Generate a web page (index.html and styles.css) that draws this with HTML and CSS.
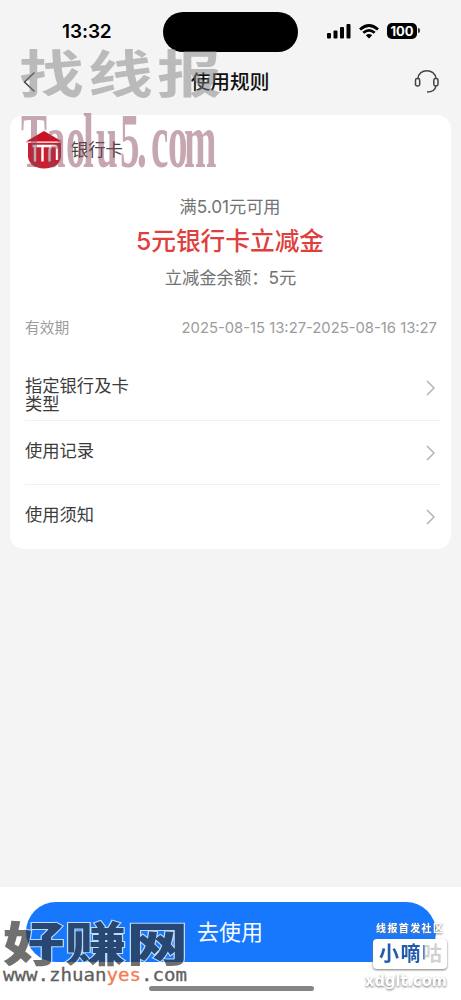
FILE: index.html
```
<!DOCTYPE html>
<html lang="zh-CN">
<head>
<meta charset="utf-8">
<title>使用规则</title>
<link rel="stylesheet" href="styles.css">
</head>
<body>
<div class="screen">
  <header class="status">
    <span class="time">13:32</span>
    <span class="island"></span>
    <div class="indicators">
      <svg width="24" height="16" viewBox="0 0 24 16"><rect x="0" y="10" width="4" height="5.5" rx="1"/><rect x="6.5" y="7.5" width="4" height="8" rx="1"/><rect x="13" y="4" width="4" height="11.5" rx="1"/><rect x="19.5" y="1" width="4" height="14.5" rx="1"/></svg>
      <svg class="wifi" width="20" height="16" viewBox="0 0 20 16"><g fill="none" stroke="#000" stroke-width="2.8"><path d="M1 6.5Q10-1.5 19 6.5"/><path d="M4.3 9.8Q10 5 15.7 9.8"/></g><path d="M6.8 12.3Q10 9.5 13.2 12.3L10 15.5Z"/></svg>
      <span class="battery">100</span>
      <span class="battery-tip"></span>
    </div>
  </header>
  <nav class="nav">
    <svg class="back" width="12" height="22" viewBox="0 0 12 22"><path d="M11.5 1.5L1.5 11L11.5 20.5"/></svg>
    <h1>使用规则</h1>
    <svg class="support" width="26" height="26" viewBox="0 0 26 26"><path d="M4 9.5C4.5-1 21-1 22 9.5M22 16.5C21.5 20.500 18 23 13 23"/><rect x="1.5" y="9.5" width="4.2" height="7.5" rx="1.7"/><rect x="19.8" y="9.5" width="4.2" height="7.5" rx="1.7"/></svg>
  </nav>
  <main class="card">
    <div class="brand">
      <svg width="38" height="40" viewBox="0 0 38 40"><path d="M3 13H36V27Q34 38 19 38.500Q5 38 3 27Z" fill="#c91f31"/><path d="M1 11.500L19 1L37 11.500Z" fill="#ce1025"/><path d="M1 12.500H37" stroke="#f3c5ca" stroke-width="1"/><path d="M7.500 16H29.500Q32 16 32 19V30M10 16V31.500M17.500 16V31.500M24.500 31.500V21Q25 16 28 16" fill="none" stroke="#fff" stroke-width="2.400"/></svg>
      <span>银行卡</span>
    </div>
    <p class="condition">满5.01元可用</p>
    <h2>5元银行卡立减金</h2>
    <p class="balance">立减金余额：5元</p>
    <div class="validity"><span>有效期</span><span class="dates">2025-08-15 13:27-2025-08-16 13:27</span></div>
    <div class="row first"><span>指定银行及卡类型</span><svg class="chevron" width="10" height="16" viewBox="0 0 10 16"><path d="M1 1L8 8L1 15"/></svg></div>
    <div class="row"><span>使用记录</span><svg class="chevron" width="10" height="16" viewBox="0 0 10 16"><path d="M1 1L8 8L1 15"/></svg></div>
    <div class="row"><span>使用须知</span><svg class="chevron" width="10" height="16" viewBox="0 0 10 16"><path d="M1 1L8 8L1 15"/></svg></div>
  </main>
  <footer class="footer">
    <div class="button">去使用</div>
    <div class="home"></div>
  </footer>
  <svg class="marks" width="461" height="1000" viewBox="0 0 461 1000">
    <defs>
      <linearGradient id="split" gradientUnits="userSpaceOnUse" x1="0" y1="0" x2="461" y2="0"><stop offset=".919" stop-color="#235baa"/><stop offset=".922" stop-color="#d2d2d2"/></linearGradient>
      <pattern id="goodText" patternUnits="userSpaceOnUse" width="461" height="1000" patternTransform="scale(.8 1.0638) translate(-3 -961)"><rect width="461" height="1000" fill="#707070"/><rect x="26" y="902" width="410" height="60" rx="30" fill="#294773"/></pattern>
      <pattern id="goodEdge" patternUnits="userSpaceOnUse" width="461" height="1000" patternTransform="scale(.8 1.0638) translate(-3 -961)"><rect x="26" y="902" width="410" height="60" rx="30" fill="#b9dcff"/></pattern>
    </defs>
    <text class="mark-top" transform="translate(19 93) scale(1.2 .94)" textLength="169">找线报</text>
    <text class="mark-serif" transform="translate(0 167) scale(.5 1)" x="42 92 132 166 192 240 274 302 336 368">Taolu5.com</text>
    <text class="mark-good" transform="translate(3 961) scale(1.25 .94)" textLength="148">好赚网</text>
    <text class="mark-url" x="3" y="981" textLength="184" lengthAdjust="spacingAndGlyphs">www.zhuan<tspan class="yes">yes</tspan>.com</text>
    <g class="mark-right">
      <text class="slogan" x="376" y="932" textLength="67">线报首发社区</text>
      <rect x="373" y="939" width="74" height="30" rx="4" fill="#fff"/>
      <text class="logo" x="379" y="961" textLength="63">小嘀咕</text>
      <text class="domain" x="365" y="986" textLength="82" lengthAdjust="spacingAndGlyphs">xdglt.com</text>
    </g>
  </svg>
</div>
</body>
</html>
```
FILE: styles.css
```
* { box-sizing: border-box; }
body { margin: 0; background: #f4f4f4; font-family: Inter, "Noto Sans CJK SC", sans-serif; }
h1, h2, p { margin: 0; }
svg { display: block; flex: none; }
.screen { position: relative; width: 461px; height: 1000px; display: flex; flex-direction: column; overflow: hidden; }
.status { height: 52px; padding: 12px 40px 0 62px; display: flex; align-items: flex-start; }
.time { width: 101px; padding-top: 8px; font-size: 19px; line-height: 24px; font-weight: 600; letter-spacing: -.1px; }
.island { width: 135px; height: 40px; border-radius: 20px; background: #000; }
.indicators { display: flex; align-items: center; padding: 10px 0 0 29px; height: 27px; }
.wifi { margin-left: 8px; }
.battery { width: 30px; height: 16px; margin-left: 8px; border-radius: 5px; background: #000; color: #fff; font-size: 13px; line-height: 16px; font-weight: 700; text-align: center; }
.battery-tip { width: 2px; height: 5px; margin-left: 1px; background: #333; border-radius: 0 2px 2px 0; }
.nav { height: 63px; padding: 0 21px 4px 23px; display: flex; align-items: center; justify-content: space-between; }
.nav path, .nav rect { fill: none; stroke: #444; stroke-width: 1.5; }
.back { margin-right: 11px; }
h1 { font-size: 19.7px; line-height: 28px; font-weight: 500; color: #111; }
.card { width: 441px; height: 434px; margin-left: 10px; padding: 15px 10px 0 15px; border-radius: 14px; background: #fff; display: flex; flex-direction: column; }
.brand { display: flex; align-items: center; height: 40px; gap: 8px; font-size: 17.3px; color: #444; }
.brand span { padding-bottom: 3px; }
.condition, .balance { text-align: center; font-size: 17.2px; line-height: 24px; color: #727272; padding-right: 6px; }
.condition { margin-top: 25px; }
h2 { height: 36px; margin-top: 4px; padding-right: 6px; text-align: center; font-size: 24.7px; line-height: 36px; font-weight: 500; color: #df403d; }
.balance { margin-top: 7px; padding-right: 5px; font-size: 17.3px; }
.validity { margin: 25px 4px 0 0; height: 24px; display: flex; justify-content: space-between; align-items: center; color: #9c9c9c; font-size: 14.7px; }
.dates { font-size: 14.8px; padding-top: 3px; }
.row { height: 64.5px; border-bottom: 1px solid #f0f0f0; display: flex; align-items: flex-start; justify-content: space-between; padding: 21px 5px 0 0; font-size: 17.3px; line-height: 18px; color: #3c3c3c; }
.row span { width: 106px; }
.first { height: 82px; padding-top: 38px; }
.row:last-child { border: 0; }
.chevron { margin-top: 3px; }
.chevron path { fill: none; stroke: #b4b4b4; stroke-width: 1.5; }
.footer { margin-top: auto; height: 113px; background: #fff; padding: 15px 25px 0 26px; display: flex; flex-direction: column; }
.button { height: 60px; border-radius: 30px; background: #1778fe; color: #f7faff; font-size: 22px; line-height: 60px; text-align: center; padding-right: 2px; }
.home { width: 165px; height: 5px; margin: 24px auto 0; border-radius: 3px; background: #858585; }
.marks { position: absolute; inset: 0; }
.mark-top { font: 700 54px "Noto Sans CJK SC", sans-serif; fill: #808080; fill-opacity: .5; }
.mark-serif { font: 700 78px "Liberation Serif", serif; fill: #894659; opacity: .48; }
.mark-good { font: 900 49px "Noto Sans CJK SC", sans-serif; fill: url(#goodText); stroke: url(#goodEdge); stroke-width: 2px; paint-order: stroke; }
.mark-url { font: 400 17px "DejaVu Sans Mono", monospace; fill: #606060; stroke: #606060; stroke-width: .3px; }
.yes { fill: #f47b50; stroke: #f47b50; }
.slogan { font: 700 10px "Noto Sans CJK SC", sans-serif; fill: #fff; }
.logo { font: 700 20px "Noto Sans CJK SC", sans-serif; fill: url(#split); }
.domain { font: 700 16px "DejaVu Sans", sans-serif; fill: #fff; }
.mark-right { filter: drop-shadow(0 1px 1px #777); }
```
